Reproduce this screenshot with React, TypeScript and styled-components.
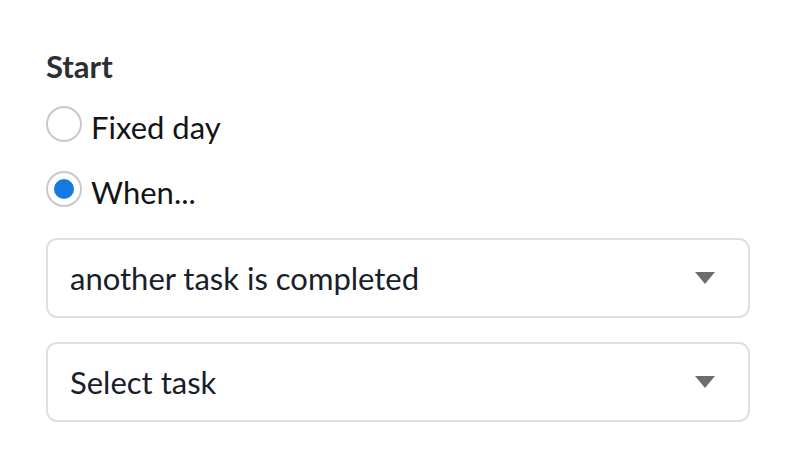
import React from "react";
import styled, { createGlobalStyle } from "styled-components";

const Global = createGlobalStyle`
  html, body { margin: 0; padding: 0; background: #ffffff; }
  body { font-family: Lato, "Open Sans", sans-serif; }
  * { box-sizing: border-box; }
`;

const Page = styled.div`
  width: 796px;
  height: 470px;
  padding: 46px 46px 0 46px;
  display: flex;
  flex-direction: column;
`;

const Title = styled.div`
  font-size: 31px;
  line-height: 40px;
  font-weight: 700;
  color: #2b2f34;
  margin-bottom: 20px;
`;

const RadioGroup = styled.div`
  display: flex;
  flex-direction: column;
  gap: 24px;
  margin-bottom: 26px;
`;

const RadioRow = styled.label`
  display: flex;
  align-items: flex-start;
  gap: 9px;
  cursor: pointer;
`;

const RadioCircle = styled.span<{ $checked?: boolean }>`
  flex: none;
  width: 36px;
  height: 36px;
  border-radius: 50%;
  border: 2px solid #c6cacf;
  background: #ffffff;
  display: flex;
  align-items: center;
  justify-content: center;
  &::after {
    content: "";
    display: ${(p) => (p.$checked ? "block" : "none")};
    width: 20px;
    height: 20px;
    border-radius: 50%;
    background: #1479e3;
  }
`;

const RadioLabel = styled.span`
  font-size: 31px;
  line-height: 40px;
  margin-top: 1px;
  color: #141414;
`;

const SelectGroup = styled.div`
  display: flex;
  flex-direction: column;
  gap: 24px;
`;

const SelectBox = styled.div`
  height: 80px;
  border: 2px solid #dcdfe3;
  border-radius: 11px;
  padding: 0 33px 0 22px;
  display: flex;
  align-items: center;
  justify-content: space-between;
  background: #ffffff;
`;

const SelectText = styled.span`
  font-size: 31px;
  line-height: 40px;
  color: #17202b;
`;

const Caret = () => (
  <svg width="20" height="12" viewBox="0 0 20 12">
    <path d="M0 0 L20 0 L10 12 Z" fill="#6d6d6d" />
  </svg>
);

const Radio = ({ label, checked }: { label: string; checked?: boolean }) => (
  <RadioRow>
    <RadioCircle $checked={checked} />
    <RadioLabel>{label}</RadioLabel>
  </RadioRow>
);

const Select = ({ value }: { value: string }) => (
  <SelectBox>
    <SelectText>{value}</SelectText>
    <Caret />
  </SelectBox>
);

export default function App() {
  return (
    <>
      <Global />
      <Page>
        <Title>Start</Title>
        <RadioGroup>
          <Radio label="Fixed day" />
          <Radio label="When..." checked />
        </RadioGroup>
        <SelectGroup>
          <Select value="another task is completed" />
          <Select value="Select task" />
        </SelectGroup>
      </Page>
    </>
  );
}
